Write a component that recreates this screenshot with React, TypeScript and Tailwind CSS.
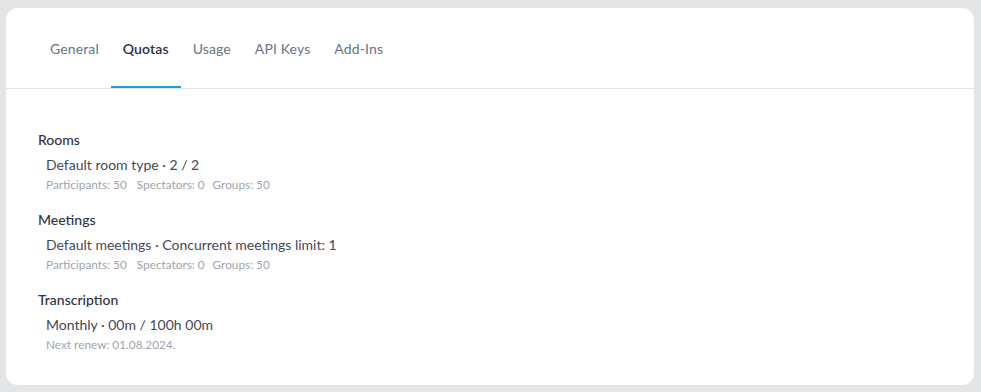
import React from 'react'

const TABS = ['General', 'Quotas', 'Usage', 'API Keys', 'Add-Ins']

const SECTIONS = [
  { title: 'Rooms', main: 'Default room type · 2 / 2', sub: ['Participants: 50', 'Spectators: 0', 'Groups: 50'] },
  { title: 'Meetings', main: 'Default meetings · Concurrent meetings limit: 1', sub: ['Participants: 50', 'Spectators: 0', 'Groups: 50'] },
  { title: 'Transcription', main: 'Monthly · 00m / 100h 00m', sub: ['Next renew: 01.08.2024.'] },
]

export default function App() {
  return (
    <div className="w-[981px] h-[392px] bg-[#e4e5e7] pt-2 pl-[6px] pr-[7px]" style={{ fontFamily: 'Lato, "Noto Sans", sans-serif' }}>
      <div className="bg-white rounded-xl h-[377px]">
        {/* Tabs */}
        <div className="flex px-8 border-b border-[#e3e4e8] h-[81px]">
          {TABS.map(t => (
            <div key={t}
              className={`flex items-center px-3 pt-[2px] text-[14px] tracking-[0.12px] border-b-2 ${t === 'Quotas' ? 'border-[#1a9fd9] text-[#2d3047] font-semibold' : 'border-transparent text-[#6d7285]'}`}>
              {t}
            </div>
          ))}
        </div>

        {/* Quotas */}
        <div className="px-8 pt-[41px] flex flex-col gap-[17px]">
          {SECTIONS.map(s => (
            <div key={s.title}>
              <div className="text-[14px] leading-5 font-medium text-[#2f3244]">{s.title}</div>
              <div className="pl-2 mt-[5px]">
                <div className="text-[14px] leading-5 text-[#454858]">{s.main}</div>
                <div className="flex mt-[2px] text-[11.8px] leading-4 text-[#a0a3ad]">
                  {s.sub.map((x, i) => <span key={x} className={i === 0 ? 'mr-[10px]' : 'mr-2'}>{x}</span>)}
                </div>
              </div>
            </div>
          ))}
        </div>
      </div>
    </div>
  )
}
